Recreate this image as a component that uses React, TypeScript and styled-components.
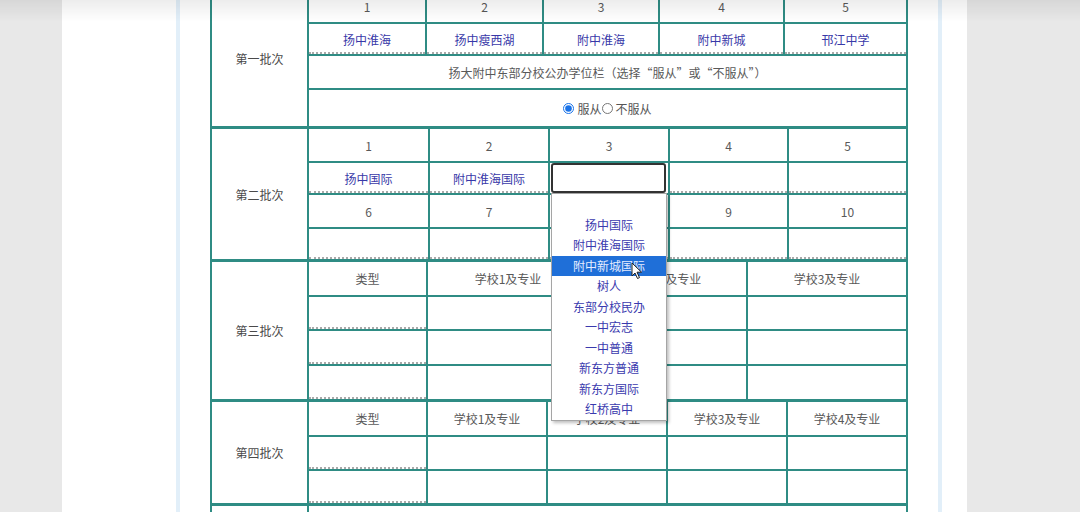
import React from 'react';
import styled, { createGlobalStyle } from 'styled-components';

const teal = '#2f8c84';

const GlobalStyle = createGlobalStyle`
  html, body {
    margin: 0;
    padding: 0;
    background: #e8e8e8;
    overflow: hidden;
    font-family: "Noto Sans CJK SC", "Noto Sans", sans-serif;
  }
  * { box-sizing: border-box; }
`;

const Page = styled.div`
  margin-left: 62px;
  width: 905px;
  height: 512px;
  background: #fff;
  overflow: hidden;
`;

const Frame = styled.div`
  display: flow-root;
  margin-left: 114px;
  width: 766px;
  height: 100%;
  border-left: 4px solid #e2eff9;
  border-right: 4px solid #e2eff9;
  padding: 0 30px;
`;

const TopShade = styled.div`
  position: fixed;
  left: 0;
  top: 0;
  width: 100%;
  height: 22px;
  background: linear-gradient(rgba(0, 0, 0, 0.07), rgba(0, 0, 0, 0));
  pointer-events: none;
`;

const Table = styled.div`
  margin-top: -12px;
  background: ${teal};
  padding: 2px 2px 0;
  display: flex;
  flex-direction: column;
  gap: 3px;
`;

const Section = styled.div`
  display: grid;
  grid-template-columns: 95px 1fr;
  gap: 2px;
`;

const Label = styled.div`
  background: #fff;
  display: flex;
  align-items: center;
  justify-content: center;
  font-size: 12px;
  color: #4a4a4a;
`;

const Body = styled.div<{ $cols: string; $rows: string }>`
  display: grid;
  grid-template-columns: ${(p) => p.$cols};
  grid-template-rows: ${(p) => p.$rows};
  gap: 2px;
`;

const Cell = styled.div<{ $span?: number; $dotted?: boolean; $tone?: 'num' | 'name' | 'head' }>`
  position: relative;
  background: #fff;
  display: flex;
  align-items: center;
  justify-content: center;
  font-size: 12px;
  grid-column: ${(p) => (p.$span ? `span ${p.$span}` : 'auto')};
  color: ${(p) => (p.$tone === 'name' ? '#3838a8' : '#595959')};
  border-bottom: ${(p) => (p.$dotted ? '2px dotted #a9a9a9' : 'none')};
  padding-top: ${(p) => (p.$dotted ? '2px' : '0')};
`;

const RadioRow = styled.label`
  display: flex;
  align-items: center;
  gap: 1px;
  font-size: 12px;
  color: #555;
  & input {
    width: 11px;
    height: 11px;
    margin: 0 2px 0 0;
    accent-color: #1a73e8;
  }
`;

const SelectBox = styled.div`
  position: absolute;
  left: 1px;
  right: 2px;
  top: 0;
  bottom: 0;
  border: 2px solid #333;
  border-radius: 3px;
  background: #fff;
`;

const Dropdown = styled.ul`
  position: absolute;
  left: 1px;
  top: 100%;
  width: 116px;
  margin: 0;
  padding: 0;
  list-style: none;
  background: #fff;
  border: 1px solid #a5a5a5;
  box-shadow: 2px 2px 3px rgba(0, 0, 0, 0.25);
  z-index: 5;
`;

const Option = styled.li<{ $active?: boolean }>`
  height: 20.5px;
  line-height: 20.5px;
  text-align: center;
  font-size: 12px;
  color: ${(p) => (p.$active ? '#e6ecff' : '#3a3aae')};
  background: ${(p) => (p.$active ? '#1f6fd8' : 'transparent')};
`;

const Cursor = styled.svg`
  position: absolute;
  left: 79px;
  top: 68px;
`;

const first = ['扬中淮海', '扬中瘦西湖', '附中淮海', '附中新城', '邗江中学'];
const options = ['', '扬中国际', '附中淮海国际', '附中新城国际', '树人', '东部分校民办', '一中宏志', '一中普通', '新东方普通', '新东方国际', '红桥高中'];

const App: React.FC = () => {
  return (
    <>
      <GlobalStyle />
      <Page>
        <Frame>
          <Table>
            <Section>
              <Label>第一批次</Label>
              <Body $cols="116px 115px 114px 123px 121px" $rows="32px 30px 32px 36px">
                {[1, 2, 3, 4, 5].map((n) => (
                  <Cell key={n}>{n}</Cell>
                ))}
                {first.map((s) => (
                  <Cell key={s} $tone="name" $dotted>
                    {s}
                  </Cell>
                ))}
                <Cell $span={5}>扬大附中东部分校公办学位栏（选择“服从”或“不服从”）</Cell>
                <Cell $span={5}>
                  <RadioRow>
                    <input type="radio" name="obey" defaultChecked />
                    服从
                  </RadioRow>
                  <RadioRow>
                    <input type="radio" name="obey" />
                    不服从
                  </RadioRow>
                </Cell>
              </Body>
            </Section>

            <Section>
              <Label>第二批次</Label>
              <Body $cols="119px 118px 118px 117px 117px" $rows="32px 30px 32px 30px">
                {[1, 2, 3, 4, 5].map((n) => (
                  <Cell key={n}>{n}</Cell>
                ))}
                <Cell $tone="name" $dotted>扬中国际</Cell>
                <Cell $tone="name" $dotted>附中淮海国际</Cell>
                <Cell>
                  <SelectBox />
                  <Dropdown>
                    {options.map((o, i) => (
                      <Option key={i} $active={i === 3}>
                        {o || '\u00a0'}
                      </Option>
                    ))}
                    <Cursor width="12" height="18" viewBox="0 0 12 18">
                      <path d="M1 1 L1 14 L4 11 L6.5 16.5 L8.5 15.6 L6 10.2 L10.5 10.2 Z" fill="#fff" stroke="#222" strokeWidth="1" strokeLinejoin="round" />
                    </Cursor>
                  </Dropdown>
                </Cell>
                <Cell $dotted />
                <Cell $dotted />
                {[6, 7, 8, 9, 10].map((n) => (
                  <Cell key={n}>{n}</Cell>
                ))}
                {[0, 1, 2, 3, 4].map((n) => (
                  <Cell key={n} $dotted />
                ))}
              </Body>
            </Section>

            <Section>
              <Label>第三批次</Label>
              <Body $cols="117px 160px 156px 158px" $rows="33px 32px 33px 33px">
                <Cell>类型</Cell>
                <Cell>学校1及专业</Cell>
                <Cell>学校2及专业</Cell>
                <Cell>学校3及专业</Cell>
                {[0, 1, 2].map((r) => (
                  <React.Fragment key={r}>
                    <Cell $dotted />
                    <Cell />
                    <Cell />
                    <Cell />
                  </React.Fragment>
                ))}
              </Body>
            </Section>

            <Section>
              <Label>第四批次</Label>
              <Body $cols="117px 118px 118px 118px 118px" $rows="33px 32px 32px">
                <Cell>类型</Cell>
                <Cell>学校1及专业</Cell>
                <Cell>学校2及专业</Cell>
                <Cell>学校3及专业</Cell>
                <Cell>学校4及专业</Cell>
                {[0, 1].map((r) => (
                  <React.Fragment key={r}>
                    <Cell $dotted />
                    <Cell />
                    <Cell />
                    <Cell />
                    <Cell />
                  </React.Fragment>
                ))}
              </Body>
            </Section>

            <Section>
              <Label />
              <Body $cols="597px" $rows="40px">
                <Cell />
              </Body>
            </Section>
          </Table>
        </Frame>
      </Page>
      <TopShade />
    </>
  );
};

export default App;
